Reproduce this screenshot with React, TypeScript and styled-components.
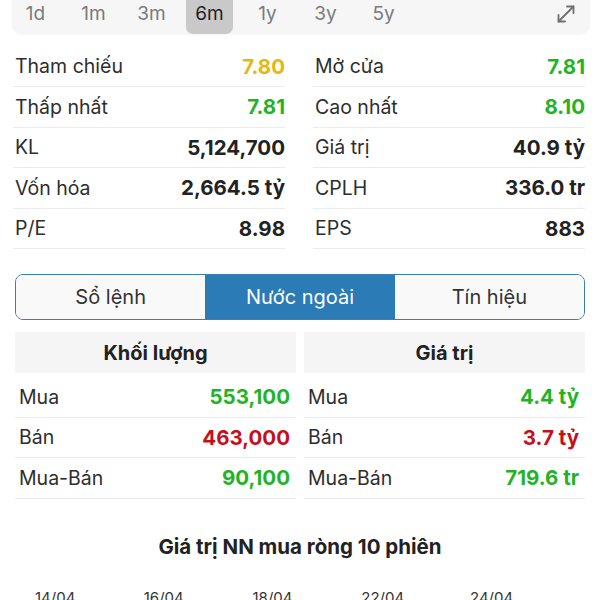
import React from 'react';
import styled, { createGlobalStyle } from 'styled-components';

const GlobalStyle = createGlobalStyle`
  body {
    margin: 0;
    background: #ffffff;
    font-family: Inter, "Liberation Sans", Arial, sans-serif;
    color: #2a2a2a;
  }
`;

const periods = ['1d', '1m', '3m', '6m', '1y', '3y', '5y'];

type Tone = 'ref' | 'up' | 'down' | 'plain';

const stats: [string, string, Tone, string, string, Tone][] = [
  ['Tham chiếu', '7.80', 'ref', 'Mở cửa', '7.81', 'up'],
  ['Thấp nhất', '7.81', 'up', 'Cao nhất', '8.10', 'up'],
  ['KL', '5,124,700', 'plain', 'Giá trị', '40.9 tỷ', 'plain'],
  ['Vốn hóa', '2,664.5 tỷ', 'plain', 'CPLH', '336.0 tr', 'plain'],
  ['P/E', '8.98', 'plain', 'EPS', '883', 'plain'],
];

const volume: [string, string, Tone][] = [
  ['Mua', '553,100', 'up'],
  ['Bán', '463,000', 'down'],
  ['Mua-Bán', '90,100', 'up'],
];

const value: [string, string, Tone][] = [
  ['Mua', '4.4 tỷ', 'up'],
  ['Bán', '3.7 tỷ', 'down'],
  ['Mua-Bán', '719.6 tr', 'up'],
];

const dates = ['14/04', '16/04', '18/04', '22/04', '24/04'];

const toneColor = (t: Tone) =>
  t === 'ref' ? '#e6b70e' : t === 'up' ? '#1fb426' : t === 'down' ? '#c5101c' : '#222222';

export default function App() {
  return (
    <Page>
      <GlobalStyle />
      <PeriodBar>
        {periods.map((p) => (
          <Period key={p} active={p === '6m'}>{p}</Period>
        ))}
        <Expand>
          <svg width="22" height="22" viewBox="0 0 22 22" fill="none" stroke="#6f6f6f" strokeWidth="1.8" strokeLinecap="round" strokeLinejoin="round">
            <path d="M3.5 18.5 18.5 3.5" />
            <path d="M12 3.5h6.5V10" />
            <path d="M3.5 12v6.5H10" />
          </svg>
        </Expand>
      </PeriodBar>

      <StatsGrid>
        {['left', 'right'].map((side) => (
          <StatCol key={side}>
            {stats.map((r) => {
              const [label, val, tone] = side === 'left' ? [r[0], r[1], r[2]] : [r[3], r[4], r[5]];
              return (
                <StatRow key={label}>
                  <Label>{label}</Label>
                  <Value tone={tone}>{val}</Value>
                </StatRow>
              );
            })}
          </StatCol>
        ))}
      </StatsGrid>

      <Tabs>
        <Tab>Sổ lệnh</Tab>
        <Tab active>Nước ngoài</Tab>
        <Tab>Tín hiệu</Tab>
      </Tabs>

      <Foreign>
        <ForeignCol>
          <Header>Khối lượng</Header>
          <Rows>
            {volume.map(([l, v, t]) => (
              <ForeignRow key={l}>
                <Label>{l}</Label>
                <Value tone={t}>{v}</Value>
              </ForeignRow>
            ))}
          </Rows>
        </ForeignCol>
        <ForeignCol>
          <Header>Giá trị</Header>
          <Rows>
            {value.map(([l, v, t]) => (
              <ForeignRow key={l}>
                <Label>{l}</Label>
                <Value tone={t}>{v}</Value>
              </ForeignRow>
            ))}
          </Rows>
        </ForeignCol>
      </Foreign>

      <ChartTitle>Giá trị NN mua ròng 10 phiên</ChartTitle>
      <Axis>
        {dates.map((d) => (
          <DateLabel key={d}>{d}</DateLabel>
        ))}
      </Axis>
    </Page>
  );
}

const Page = styled.div`
  width: 600px;
  height: 600px;
  overflow: hidden;
`;

const PeriodBar = styled.div`
  display: flex;
  align-items: stretch;
  gap: 11px;
  height: 34px;
  margin: 0 10px 0 12px;
  background: #f6f6f6;
  border-radius: 0 0 10px 10px;
  box-shadow: 0 1px 2px rgba(0, 0, 0, 0.04);
`;

const Period = styled.div<{ active?: boolean }>`
  width: 47px;
  display: flex;
  align-items: center;
  justify-content: center;
  font-size: 19px;
  color: ${(p) => (p.active ? '#222222' : '#7b7b7b')};
  background: ${(p) => (p.active ? '#c9c9c9' : 'transparent')};
  border-radius: 0 0 7px 7px;
  margin-top: -4px;
  padding-bottom: 3px;
`;

const Expand = styled.div`
  margin-left: auto;
  margin-right: 13px;
  display: flex;
  align-items: center;
  margin-top: -6px;
`;

const StatsGrid = styled.div`
  display: grid;
  grid-template-columns: 272px 272px;
  column-gap: 28px;
  padding: 0 15px 0 13px;
  margin-top: 12.5px;
`;

const StatCol = styled.div`
  display: flex;
  flex-direction: column;
`;

const StatRow = styled.div`
  height: 40.5px;
  box-sizing: border-box;
  border-bottom: 1px solid #ececec;
  display: flex;
  align-items: center;
  justify-content: space-between;
  padding: 0 0 0 2px;
`;

const Label = styled.span`
  font-size: 19.5px;
  color: #2d2d2d;
`;

const Value = styled.span<{ tone: Tone }>`
  font-size: 20.5px;
  font-weight: 700;
  color: ${(p) => toneColor(p.tone)};
`;

const Tabs = styled.div`
  display: grid;
  grid-template-columns: 1fr 1fr 1fr;
  margin: 25px 15px 0;
  height: 46px;
  border: 1px solid #3a7fb1;
  border-radius: 8px;
  overflow: hidden;
  box-sizing: border-box;
`;

const Tab = styled.div<{ active?: boolean }>`
  display: flex;
  align-items: center;
  justify-content: center;
  font-size: 20px;
  color: ${(p) => (p.active ? '#ffffff' : '#333333')};
  background: ${(p) => (p.active ? '#2b7bb6' : '#f9f9f9')};
`;

const Foreign = styled.div`
  display: grid;
  grid-template-columns: 281px 281px;
  column-gap: 8px;
  margin: 12px 15px 0;
`;

const ForeignCol = styled.div`
  display: flex;
  flex-direction: column;
`;

const Header = styled.div`
  height: 41px;
  background: #f5f5f5;
  display: flex;
  align-items: center;
  justify-content: center;
  font-size: 20px;
  font-weight: 700;
  color: #222222;
`;

const Rows = styled.div`
  margin-top: 4px;
  display: flex;
  flex-direction: column;
`;

const ForeignRow = styled.div`
  height: 40.5px;
  box-sizing: border-box;
  border-bottom: 1px solid #ececec;
  display: flex;
  align-items: center;
  justify-content: space-between;
  padding: 0 6px 0 4px;
`;

const ChartTitle = styled.div`
  margin-top: 35px;
  text-align: center;
  font-size: 20.5px;
  font-weight: 700;
  color: #222222;
`;

const Axis = styled.div`
  display: flex;
  margin-top: 29px;
  padding-left: 35px;
`;

const DateLabel = styled.span`
  width: 108.75px;
  font-size: 15px;
  color: #333333;
`;
